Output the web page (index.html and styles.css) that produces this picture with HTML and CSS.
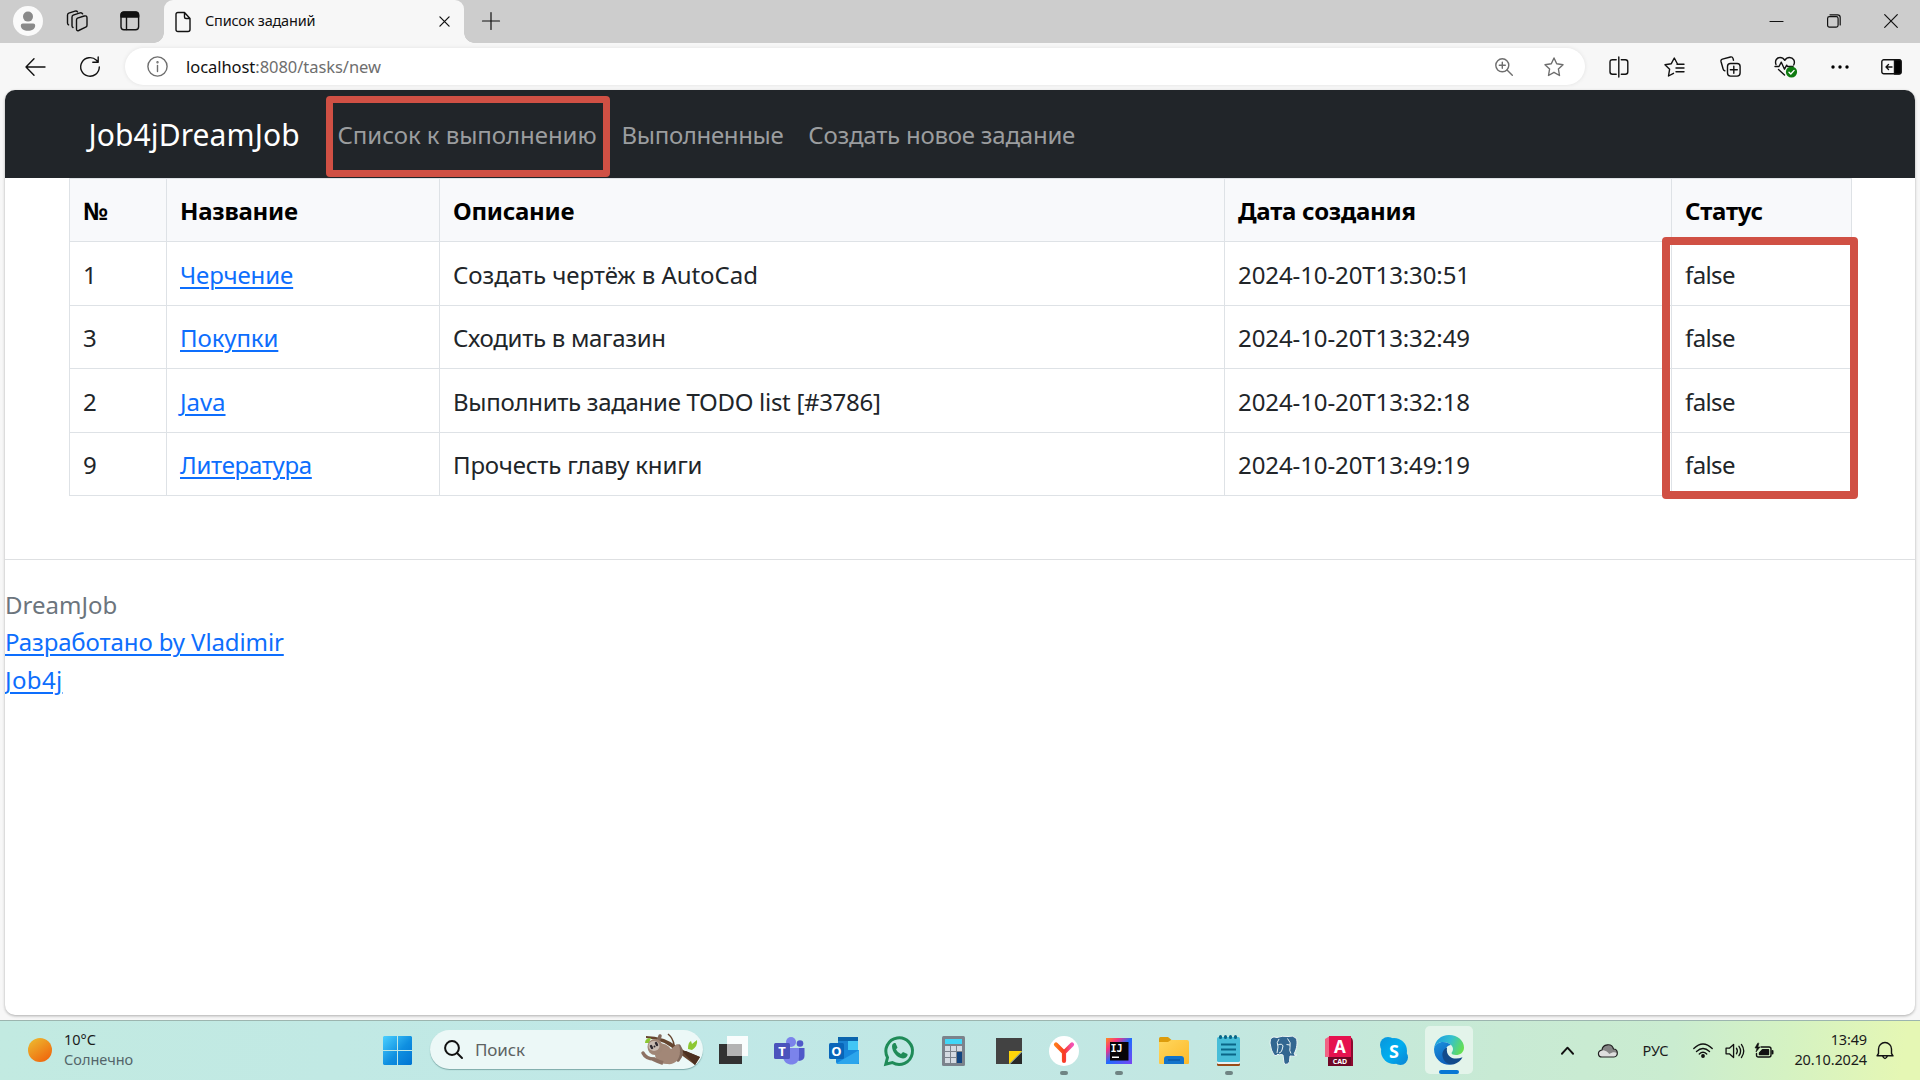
FILE: index.html
```html
<!DOCTYPE html>
<html lang="ru">
<head>
<meta charset="utf-8">
<title>Список заданий</title>
<link rel="stylesheet" href="styles.css">
</head>
<body>
<div class="screen">
  <header class="titlebar">
    <span class="cell"><svg width="30" height="30" viewBox="0 0 30 30"><circle cx="15" cy="15" r="15" fill="#fafafa"/><circle cx="15" cy="10.6" r="5" fill="#8a8a8a"/><path d="M7.800 19.500q0-2 2-2h10.400q2 0 2 2c0 3.500-3.200 5.300-7.200 5.300s-7.200-1.800-7.200-5.300z" fill="#8a8a8a"/></svg></span>
    <span class="cell"><svg class="line" width="22" height="22" viewBox="0 0 22 22"><path d="M11.500 8.200 18.200 6q2.800-.7 2.800 1.800v7.400q0 1.500-1.300 2l-7 3.300q-2.200.8-2.200-1.500v-9q0-1.400 1-1.800z"/><path d="M7 17.500q-1-.4-1-1.800V7.200q0-1.500 1.200-2L14 2.800q1.800-.5 2.600 1"/><path d="M2.600 14.800Q1.500 14.200 1.500 13V5.200q0-1.500 1.300-2L9 1.200q1.800-.5 2.600.8"/></svg></span>
    <span class="cell"><svg class="line" width="20" height="20" viewBox="0 0 20 20"><rect x="1" y="1.200" width="17.600" height="17.600" rx="3"/><path d="M1 6V4q0-3 3-3h11.600q3 0 3 3v2z" fill="#111"/><path d="M6.500 6v12.500"/></svg></span>
    <div class="tab">
      <svg class="line" width="16" height="22" viewBox="0 0 16 22"><path d="M3 1.500h6.500l5.500 6V18.500q0 2-2 2H3q-2 0-2-2v-15q0-2 2-2zM9.500 1.500V6q0 1.500 1.500 1.500h4"/></svg>
      <span class="tab-title">Список заданий</span>
      <svg class="line" width="11" height="11" viewBox="0 0 12 12"><path d="m1 1 10 10M11 1 1 11"/></svg>
    </div>
    <span class="cell"><svg class="line thin" width="18" height="18" viewBox="0 0 18 18"><path d="M9 .5v17M.5 9h17"/></svg></span>
    <span></span>
    <span class="cell"><svg class="line thin" width="13" height="13" viewBox="0 0 13 13"><path d="M0 6.500h13"/></svg></span>
    <span class="cell"><svg class="line thin" width="14" height="14" viewBox="0 0 14 14"><rect x=".6" y="2.600" width="10.500" height="10.500" rx="1.800"/><path d="M3 .8h7.500q2.700 0 2.700 2.700V11"/></svg></span>
    <span class="cell"><svg class="line thin" width="14" height="14" viewBox="0 0 14 14"><path d="m.7.7 12.600 12.600M13.300.7.7 13.300"/></svg></span>
  </header>

  <div class="toolbar">
    <span class="cell"><svg class="line" width="20" height="18" viewBox="0 0 20 18"><path d="M9 .8 1 9l8 8.200M1 9h19"/></svg></span>
    <span class="cell"><svg class="line" width="22" height="22" viewBox="0 0 22 22"><path d="M20.300 11A9.300 9.300 0 1 1 17.500 4.300L19 6M19.200 1v5.200h-5.400"/></svg></span>
    <div class="address">
      <svg class="line grey" width="21" height="21" viewBox="0 0 21 21"><circle cx="10.500" cy="10.500" r="9.600"/><path d="M10.500 9.500v6"/><circle cx="10.500" cy="6.300" r=".5"/></svg>
      <span class="url"><b>localhost</b>:8080/tasks/new</span>
      <svg class="line grey" width="18" height="18" viewBox="0 0 18 18"><circle cx="7.300" cy="7.300" r="6.500"/><path d="m12 12 5.300 5.300M7.300 4.300v6M4.300 7.300h6"/></svg>
      <svg class="line grey star" width="20" height="20" viewBox="0 0 20 20"><path d="m10 1 2.700 5.800 6.300.9-4.600 4.300 1.100 6.500L10 15.300l-5.500 3.200 1.100-6.500L1 7.700l6.300-.9z"/></svg>
    </div>
    <span class="cell"><svg class="line" width="20" height="20" viewBox="0 0 20 20"><path d="M7.200 2.700H3.500q-2.500 0-2.500 2.500v9.600q0 2.500 2.500 2.500h3.700M12.300 2.700h4q2.500 0 2.500 2.500v9.600q0 2.500-2.500 2.500h-4M9.800 0v20"/></svg></span>
    <span class="cell"><svg class="line" width="21" height="20" viewBox="0 0 21 20"><path d="M13.500 7 10.300 1 7.300 6.700 1 7.800l4.600 4.500L4.500 19l5-2.700M13 7.200h7M12 11H20M12 14.800h8"/></svg></span>
    <span class="cell"><svg class="line" width="21" height="21" viewBox="0 0 21 21"><rect x="7.500" y="7.500" width="12.600" height="12.600" rx="3"/><path d="M13.800 10.300v7M10.300 13.800h7M4.800 14.800q-1.300-.3-1.600-1.600L1 5.500q-.4-1.900 1.400-2.400L10.500 1q1.900-.5 2.500 1.400l.5 1.800"/></svg></span>
    <span class="cell"><svg class="line" width="24" height="22" viewBox="0 0 24 22"><path d="M2 8.500C.5 4.500 3 1.500 6 1.500q3 0 4.800 2.800Q12.600 1.500 15.500 1.500c4 0 6 4 4.200 7.500M1 10.500h4l2.300-4.300 3.200 7 2.200-4 .8 1.300h5.500M4.500 13.500l6 5.500"/><circle cx="17.500" cy="16" r="5.600" fill="#0f7b10" stroke="none"/><path d="m15 16.200 1.800 1.800 3.300-3.600" stroke="#fff"/></svg></span>
    <span class="cell"><svg width="18" height="4" viewBox="0 0 18 4"><circle cx="2" cy="2" r="1.700"/><circle cx="9" cy="2" r="1.700"/><circle cx="16" cy="2" r="1.700"/></svg></span>
    <span class="cell"><svg class="line" width="21" height="16" viewBox="0 0 21 16"><rect x=".8" y=".8" width="19.200" height="14" rx="2"/><path d="M11 8H5m2.500-2.500L5 8l2.500 2.500"/><path d="M13.500 1H18q2 0 2 2v10q0 2-2 2h-4.500z" fill="#000"/></svg></span>
  </div>

  <main class="page">
    <nav class="navbar">
      <a class="brand">Job4jDreamJob</a>
      <a class="nav-link framed">Список к выполнению</a>
      <a class="nav-link tight">Выполненные</a>
      <a class="nav-link snug">Создать новое задание</a>
    </nav>
    <div class="table-wrap">
      <table class="tasks">
        <colgroup><col class="c-num"><col class="c-name"><col class="c-desc"><col class="c-date"><col class="c-status"></colgroup>
        <thead><tr><th>№</th><th>Название</th><th>Описание</th><th>Дата создания</th><th>Статус</th></tr></thead>
        <tbody>
          <tr><td>1</td><td><a>Черчение</a></td><td class="loose">Создать чертёж в AutoCad</td><td>2024-10-20T13:30:51</td><td class="state">false</td></tr>
          <tr><td>3</td><td><a>Покупки</a></td><td class="tight">Сходить в магазин</td><td>2024-10-20T13:32:49</td><td class="state">false</td></tr>
          <tr><td>2</td><td><a class="loose">Java</a></td><td class="tight">Выполнить задание TODO list [#3786]</td><td>2024-10-20T13:32:18</td><td class="state">false</td></tr>
          <tr><td>9</td><td><a class="tight">Литература</a></td><td class="snug">Прочесть главу книги</td><td>2024-10-20T13:49:19</td><td class="state">false</td></tr>
        </tbody>
      </table>
      <div class="status-frame"></div>
    </div>
    <footer class="footer">
      <div class="muted">DreamJob</div>
      <div><a class="credit">Разработано by Vladimir</a></div>
      <div><a class="wide">Job4j</a></div>
    </footer>
  </main>

  <div class="taskbar">
    <div class="weather">
      <svg width="24" height="24" viewBox="0 0 24 24"><defs><linearGradient id="sun" x1=".1" y1="0" x2=".8" y2="1"><stop offset="0" stop-color="#edbb30"/><stop offset="1" stop-color="#f0640c"/></linearGradient></defs><circle cx="12" cy="12" r="12" fill="url(#sun)"/></svg>
      <div class="forecast"><div>10°C</div><div class="dim">Солнечно</div></div>
    </div>
    <span class="cell"><svg width="29" height="29" viewBox="0 0 29 29"><defs><linearGradient id="win" x1="0" y1="0" x2="29" y2="29" gradientUnits="userSpaceOnUse"><stop offset="0" stop-color="#4bd0ff"/><stop offset=".55" stop-color="#0f8fe0"/><stop offset="1" stop-color="#0074d2"/></linearGradient></defs><path d="M1 0h13v14H0V1zM15 0h13l1 1v13H15zM0 15h14v14H1l-1-1zM15 15h14v13l-1 1H15z" fill="url(#win)"/></svg></span>
    <div class="search">
      <svg class="line bold" width="19" height="19" viewBox="0 0 19 19"><circle cx="8" cy="8" r="6.900"/><path d="m13 13 5 5"/></svg>
      <span>Поиск</span>
      <svg width="60" height="34" viewBox="0 0 60 34"><path d="M5 3q18 0 32 11l7 4 15 6-5 8-15-11Q22 6 5 5z" fill="#65452f"/><path d="m41 18 4 0 14 6-5 8z" fill="#4c3020"/><path d="M27 1q5 4 6 11" fill="none" stroke="#65452f" stroke-width="1.500"/><path d="M4 10q0-5 6-5l-2 5zM47 16q0-7 3-8l1 3 5-4q1 6-5 10z" fill="#8cc832"/><path d="M17 9 19 3M38 13q5 7-1 14" fill="none" stroke="#80685b" stroke-width="3.500" stroke-linecap="round"/><path d="M17 10q9 0 13 6l6-5q3 1 3 7c0 10-6 14-13 13-9 0-12-5-12-10z" fill="#a28777"/><path d="M13 26Q5 26 2 20" fill="none" stroke="#8c7163" stroke-width="3.500" stroke-linecap="round"/><path d="M12 26q6 3 10 4" fill="none" stroke="#8c7163" stroke-width="4"/><ellipse cx="14" cy="14" rx="7.500" ry="8" fill="#a08676"/><ellipse cx="13" cy="13" rx="5.500" ry="5" fill="#c9bbb2"/><path d="m10 13 1 2m4-5 1 2" stroke="#302a30" stroke-width="2.500" stroke-linecap="round"/><circle cx="13.500" cy="13.500" r="1" fill="#302a30"/></svg>
    </div>
    <div class="apps">
      <span class="app"><svg width="30" height="30" viewBox="0 0 30 30"><path d="M0 8h23v20H0z" fill="#323232"/><path d="M8 0h21v20H8z" fill="#fff" opacity=".9"/><path d="M8 8h15v12H8z" fill="#b3b3b3"/></svg></span>
      <span class="app"><svg width="30" height="30" viewBox="0 0 30 30"><circle cx="17" cy="6" r="5" fill="#7b83eb"/><circle cx="26" cy="7.500" r="3.300" fill="#5059c9"/><path d="M22 12h8.500v8q0 4.500-6 5z" fill="#5059c9"/><path d="M9 12h16v9c0 10-15 10-16 0z" fill="#7b83eb"/><rect y="7" width="16" height="16" rx="1.500" fill="#4b53bc"/><text x="8" y="20" class="glyph" font-size="13">T</text></svg></span>
      <span class="app"><svg width="30" height="30" viewBox="0 0 30 30"><path d="M9 1h20v13H9z" fill="#0a64ad"/><path d="M9 5h10v10H9z" fill="#1a82d2"/><path d="M19 5h10v10H19z" fill="#41c6f5"/><path d="M7 14h23v14H9q-2 0-2-2z" fill="#1687dc"/><path d="m8 27 22-13v12q0 2-2 2H8z" fill="#2ca5ec"/><rect y="7" width="15" height="16" rx="1.500" fill="#0865b9"/><text x="7.500" y="20" class="glyph" font-size="13">O</text></svg></span>
      <span class="app"><svg width="32" height="32" viewBox="0 0 32 32"><path d="M4.500 22.500A13.300 13.300 0 1 1 9.300 27.500L2.800 29.200z" fill="none" stroke="#1f8b58" stroke-width="3"/><path d="M9 11q0-2 2-3h1.500l2 4.500-1.500 2q1.500 3 5 4.500l2-2 4.500 2v1.500q-1.500 3-4.500 3C14 23 9 17 9 11z" fill="#1f8b58"/></svg></span>
      <span class="app"><svg width="24" height="30" viewBox="0 0 24 30"><rect width="23" height="30" rx="1.500" fill="#7b838c"/><path d="M3 3h17v5H3z" fill="#40d6f7"/><path d="M3 10h5v5H3zm6 0h5v5H9zm6 0h5v5h-5zM3 16h5v5H3zm6 0h5v5H9zM3 22h5v5H3zm6 0h5v5H9z" fill="#d4dbe2"/><path d="M15 16h5v11h-5z" fill="#124580"/></svg></span>
      <span class="app"><svg width="26" height="26" viewBox="0 0 26 26"><path d="M0 0h26v13L13 26H0z" fill="#424242"/><path d="M13 26V13h13z" fill="#ffd60a"/><path d="M14 26h12V14z" fill="#282828"/></svg></span>
      <span class="app run"><svg width="30" height="30" viewBox="0 0 30 30"><defs><linearGradient id="ya" x1="7" y1="0" x2="23" y2="0" gradientUnits="userSpaceOnUse"><stop offset="0" stop-color="#ff7a1a"/><stop offset=".5" stop-color="#f83a22"/><stop offset="1" stop-color="#f352b5"/></linearGradient></defs><circle cx="15" cy="15" r="15" fill="#fff"/><path d="m7 8.500 8 8 8-8M15 16v9" fill="none" stroke="url(#ya)" stroke-width="4.200" stroke-linecap="round"/></svg></span>
      <span class="app run"><svg width="26" height="26" viewBox="0 0 26 26"><defs><linearGradient id="ij" x1="0" y1="0" x2="1" y2="1"><stop offset="0" stop-color="#ff8b1f"/><stop offset=".25" stop-color="#f43280"/><stop offset=".5" stop-color="#1f6cff"/><stop offset="1" stop-color="#7b45f2"/></linearGradient></defs><path d="M0 0h26v26H0z" fill="url(#ij)"/><path d="M4 4h18.500v18.500H4z" fill="#080408"/><text x="10.500" y="13.500" class="glyph mono" font-size="10">IJ</text><path d="M6 18.500h7v1.500H6z" fill="#fff"/></svg></span>
      <span class="app"><svg width="30" height="27" viewBox="0 0 30 27"><defs><linearGradient id="fold" x1="0" y1="0" x2="1" y2="1"><stop offset="0" stop-color="#ffd75e"/><stop offset="1" stop-color="#fcb92a"/></linearGradient></defs><path d="M0 1.500Q0 0 1.500 0H9l3.500 3v5H0z" fill="#dd9c0c"/><path d="M0 5h9l3-2h16q2 0 2 2v21q0 1-1 1H1q-1 0-1-1z" fill="url(#fold)"/><path d="M5 27v-5q0-3 3-3h14q3 0 3 3v5z" fill="#1273cb"/><path d="M9 23h12" stroke="#07519c" stroke-width="1.200"/></svg></span>
      <span class="app run"><svg width="23" height="31" viewBox="0 0 23 31"><rect y="14" width="23" height="17" rx="1.500" fill="#9a4b17"/><rect y="2" width="23" height="27" rx="1.500" fill="#e9f1f2"/><rect y="2" width="23" height="25" rx="1.500" fill="#47bdd8"/><path d="M4 9.500h15M4 14.500h15M4 19.500h15" stroke="#0a6687" stroke-width="2"/><path d="M3.500 1.500v1M8.500 1.500v1M13.500 1.500v1M18.500 1.500v1" stroke="#0a6687" stroke-width="3" stroke-linecap="round"/></svg></span>
      <span class="app"><svg width="29" height="30" viewBox="0 0 29 30"><path d="M8 1.500Q1-1 1 7q1 8 4 12 2 2 4-1l1 1q2-1 4 0l1 8q1 2 4 1 2-1 2-8 4 1 7-1-3 0-3-1c3-5 4-13 2-16q-3-3-8-1.500Q13-.5 8 1.500z" fill="#336791" stroke="#edf6f5" stroke-width="1"/><path d="M10 3Q7 6 9 11l-1 6M18.500 2.500q4 4 2.500 9-1 3 1 6M9 9q4-2 5 1l-1 4q-1 3-3 3M17.500 8.500l3.500.5" fill="none" stroke="#e9f4f4" stroke-width="1"/></svg></span>
      <span class="app"><svg width="28" height="30" viewBox="0 0 28 30"><path d="m0 3 5-3v21H0z" fill="#f16284"/><path d="M25 1q3 1 3 5v24h-3z" fill="#8d092f"/><path d="M4 0h22v21H4z" fill="#e5124f"/><path d="M3 21h23v9H3z" fill="#6f0726"/><text x="15" y="17" class="glyph" font-size="17">A</text><text x="15" y="28" class="glyph" font-size="7">CAD</text></svg></span>
      <span class="app"><svg width="28" height="28" viewBox="0 0 28 28"><defs><linearGradient id="sk" x1="0" y1="0" x2="28" y2="28" gradientUnits="userSpaceOnUse"><stop offset="0" stop-color="#0a94db"/><stop offset=".5" stop-color="#00aeef"/><stop offset="1" stop-color="#0b83d4"/></linearGradient></defs><g fill="url(#sk)"><circle cx="14" cy="14" r="13"/><circle cx="8" cy="8" r="8"/><circle cx="20.500" cy="20.500" r="7.500"/></g><text x="14" y="20.500" class="glyph" font-size="18">S</text></svg></span>
      <span class="app active"><svg width="30" height="30" viewBox="0 0 30 30"><defs><linearGradient id="e1" x1="0" y1=".3" x2="1" y2=".6"><stop offset="0" stop-color="#1a9ee0"/><stop offset=".5" stop-color="#35c0cf"/><stop offset="1" stop-color="#66e04f"/></linearGradient><linearGradient id="e2" x1="0" y1="0" x2=".6" y2="1"><stop offset="0" stop-color="#1b93df"/><stop offset="1" stop-color="#0d5cb8"/></linearGradient></defs><path d="M0 14C1 5 7 0 15 0c9 0 15 6 15 12.500 0 5-4 7.500-8 7.500-3 0-4.500-1-4.500-2 0-.8 1.500-1.500 1.500-4C19 10 14 7 9 7 4 7 1 10 0 14z" fill="url(#e1)"/><path d="M0 14C1 9 5 7 9 7c3 0 6 1 8 3-4 0-6 4-6 8 0 6 4 11 9 11-9 3-20-3-20-15z" fill="url(#e2)"/><path d="M13 12.500c-4 2-5 5.500-4.500 8.500 1 5.500 5 9 11.500 8.200 4-1.200 7-4 8.500-7-8 3.500-17 .5-15.500-9.700z" fill="#114a8b"/></svg></span>
    </div>
    <span></span>
    <span class="cell"><svg class="line bold" width="13" height="9" viewBox="0 0 14 9"><path d="m1 8 6-6.500L13 8"/></svg></span>
    <span class="cell"><svg width="20" height="14" viewBox="0 0 20 14"><path d="M4 13C-.5 13-1 7 4 6c.5-6 10-7.500 11.500-1C20.500 5 20.500 13 16 13z" fill="#dedede"/><path d="M4 6c.5-6 10-7.500 11.500-1 2.500.3 3.800 2 3.800 4-3-1.500-5-1-8 1Q9 6.500 4 6z" fill="#858585"/><path d="M4 13C-.5 13-1 7 4 6c.5-6 10-7.500 11.500-1C20.500 5 20.500 13 16 13z" fill="none" stroke="#202020" stroke-width="1.200"/></svg></span>
    <span class="cell lang">РУС</span>
    <span class="cell"><svg class="line" width="20" height="15" viewBox="0 0 20 15"><path d="M.8 5.500q9.200-9 18.400 0M3.500 8.500q6.500-6 13 0M6.300 11q3.700-3.300 7.400 0"/><circle cx="10" cy="13" r="1.200" fill="#111"/></svg></span>
    <span class="cell"><svg class="line" width="20" height="16" viewBox="0 0 21 17"><path d="M1 5.500h3.500L9 1.500v14l-4.500-4H1zM12 5.500q2 3 0 6M14.700 3.500q3.500 5 0 10M17.300 1.500q5 7 0 14"/></svg></span>
    <span class="cell"><svg class="line" width="20" height="16" viewBox="0 0 20 16"><path d="M7 4h8q2 0 2 2v6q0 2-2 2H4.500q-2 0-2-2v-1.500"/><path d="M8.500 6.700H14.500v4.800H5.500v-1.500z" fill="#111"/><path d="M18.500 8v2.500" stroke-width="2"/><path d="M3.500.5 1 5h2L2 9l4-5H3.800l1-3.500z" fill="#111" stroke-width=".6"/></svg></span>
    <div class="clock"><div>13:49</div><div>20.10.2024</div></div>
    <span class="cell"><svg class="line" width="18" height="19" viewBox="0 0 18 19"><path d="M2.500 12.500V8a6.500 6.500 0 0 1 13 0v4.500l1.500 2.300H1zM6.500 15q2.500 5 5 0"/></svg></span>
    <span></span>
  </div>
</div>
</body>
</html>
```
FILE: styles.css
```css
*, *::before, *::after { box-sizing: border-box; }
body { margin: 0; font-family: "Noto Sans", "Open Sans", sans-serif; color: #212529; }
svg { display: block; flex: none; overflow: visible; }
.screen { width: 1920px; height: 1080px; overflow: hidden; display: flex; flex-direction: column; background: #f7f7f7; }
.cell { display: flex; align-items: center; justify-content: center; }
.line { fill: none; stroke: #111; stroke-width: 1.4; stroke-linecap: round; stroke-linejoin: round; }
.line.thin { stroke-width: 1.2; }
.line.bold { stroke-width: 2; }
.line.grey { stroke: #6e6e6e; }
.glyph { font-family: "Noto Sans", sans-serif; font-weight: 700; fill: #fff; text-anchor: middle; }
.glyph.mono { font-family: "DejaVu Sans Mono", monospace; }

/* Browser tab strip */
.titlebar { height: 43px; flex: none; display: grid; grid-template-columns: 56px 43px 65px 300px 53px 1fr 57px 57px 58px; background: #cdcdcd; }
.titlebar > .cell { padding-bottom: 1px; }
.titlebar > .cell:nth-child(2) { padding-right: 1px; }
.titlebar > .cell:nth-child(3) { padding-right: 3px; }
.tab { position: relative; display: flex; align-items: center; padding: 0 14px 0 11px; background: #f7f7f7; border-radius: 9px 9px 0 0; }
.tab::before, .tab::after { content: ""; position: absolute; bottom: 0; width: 10px; height: 10px; }
.tab::before { left: -10px; background: radial-gradient(circle at 0 0, #cdcdcd 9.5px, #f7f7f7 10px); }
.tab::after { right: -10px; background: radial-gradient(circle at 100% 0, #cdcdcd 9.5px, #f7f7f7 10px); }
.tab-title { flex: 1; margin: 0 0 3px 14px; font-size: 14.5px; letter-spacing: -.2px; color: #111; }

/* Address row */
.toolbar { height: 47px; flex: none; display: grid; grid-template-columns: 69px 41px 1481px 55px 57px 54px 58px 50px 1fr; padding-right: 2px; }
.address { height: 37px; margin: 5px 6px 0 15px; display: flex; align-items: center; padding: 0 21px 0 22px; background: #fff; border-radius: 19px; box-shadow: 0 0 4px rgba(0,0,0,.09); }
.url { flex: 1; margin: 0 0 1px 18px; font-size: 16.5px; letter-spacing: -.05px; color: #6e6e6e; }
.url b { font-weight: 400; color: #111; }
.star { margin-left: 31px; }

/* Web page */
.page { height: 925px; flex: none; margin: 0 5px 5px; background: #fff; border-radius: 10px; overflow: hidden; box-shadow: 0 1px 3px rgba(0,0,0,.3); font-size: 24px; line-height: 37.5px; }
.navbar { height: 88px; display: flex; align-items: center; padding: 2px 0 0 83.5px; background: #212529; color: #9b9d9f; }
.brand { width: 238.5px; font-size: 30px; letter-spacing: .1px; color: #fff; }
.nav-link { position: relative; padding: 0 12.5px; }
.nav-link.framed { padding-left: 10.5px; letter-spacing: -.05px; }
.nav-link.tight { letter-spacing: -.35px; }
.nav-link.snug { letter-spacing: -.23px; }
.framed::before { content: ""; position: absolute; left: -1px; top: -20px; width: 284px; height: 81px; border: 7.5px solid #d05044; border-radius: 4px; }
.tight { letter-spacing: -.3px; }
.snug { letter-spacing: -.15px; }
.loose { letter-spacing: 0; }
.wide { letter-spacing: .35px; }

.table-wrap { position: relative; margin: 0 64px; }
.tasks { width: 1782px; table-layout: fixed; border-collapse: collapse; }
.c-num { width: 97px; } .c-name { width: 273px; } .c-desc { width: 785px; } .c-date { width: 447px; } .c-status { width: 180px; }
.tasks th, .tasks td { height: 63.4px; padding: 2px 13px 0; border: 1px solid #dee2e6; text-align: left; letter-spacing: -.1px; }
.tasks th { color: #000; background: #f8f9fb; letter-spacing: -.25px; }
.tasks .tight { letter-spacing: -.3px; }
.tasks .snug { letter-spacing: -.17px; }
.tasks .loose { letter-spacing: -.04px; }
.tasks .state { letter-spacing: -.6px; }
.tasks a, .footer a { color: #0d6efd; text-decoration: underline; text-decoration-thickness: 2px; text-underline-offset: 3px; }
.status-frame { position: absolute; left: 1593px; top: 59px; width: 196px; height: 262px; border: 8px solid #d05044; border-radius: 4px; }
.footer { margin-top: 63px; padding-top: 26px; border-top: 1px solid #dee0e2; }
.muted { color: #6c757d; }
.credit { letter-spacing: -.11px; }

/* Desktop taskbar */
.taskbar { height: 60px; flex: none; display: grid; grid-template-columns: 370px 54px 281px 770px 74px 37px 44px 51px 43px 22px 36px 91px 24px 1fr; border-top: 1px solid #9cb5af; background: linear-gradient(97deg, #c2eae1 0, #c0e8e7 35%, #c2e7e2 62%, #c8ead4 78%, #caecd0 87%, #d5f2c2 93%, #e5f7b4 99%); font-size: 14.5px; line-height: 20px; color: #1b1b1b; }
.weather { display: flex; align-items: center; gap: 12px; padding: 0 0 2px 28px; }
.forecast { margin-bottom: 2px; }
.dim { color: #53656a; }
.search { height: 39px; margin: 9px 2px 0 6px; display: flex; align-items: center; padding: 0 2px 0 14px; border-radius: 20px; background: #ecf8f7; box-shadow: 0 1px 1px rgba(60,110,110,.5); }
.search span { flex: 1; margin: 1px 0 0 12px; font-size: 17px; letter-spacing: -.1px; color: #5d6262; }
.apps { display: grid; grid-template-columns: repeat(14, 55px); margin: 0 -1px 0 1px; }
.app { position: relative; display: flex; align-items: center; justify-content: center; }
.run::after, .active::after { content: ""; position: absolute; left: 24px; bottom: 5px; width: 8px; height: 4px; border-radius: 2px; background: #6f8483; }
.active { margin: 5px 3px 6px 4px; border-radius: 5px; background: #e3f4ea; }
.active::after { left: 14px; bottom: 0; width: 20px; background: #0877d4; }
.lang { padding-bottom: 2px; }
.clock { display: flex; flex-direction: column; justify-content: center; padding: 0 6px 4px 0; text-align: right; letter-spacing: -.15px; }
```
